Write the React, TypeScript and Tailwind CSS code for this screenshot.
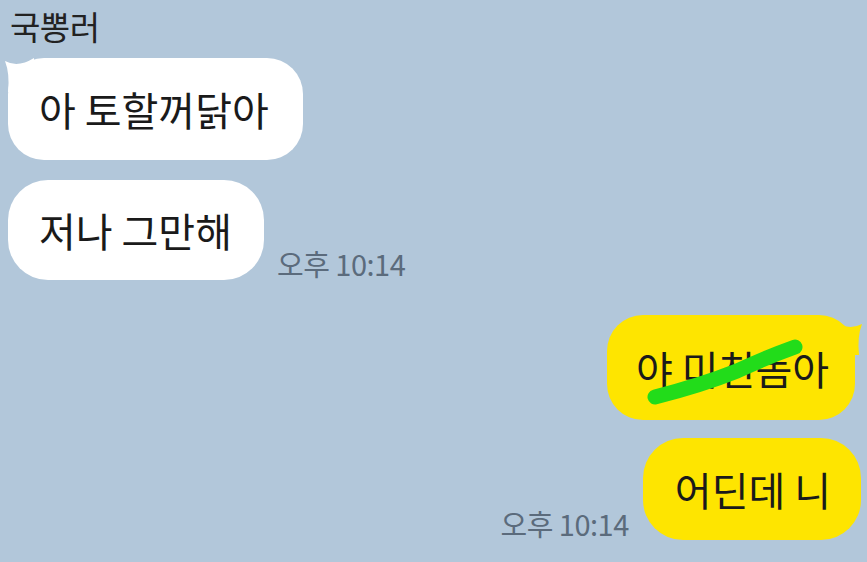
import React from "react"

const font = { fontFamily: '"Noto Sans CJK KR", "Noto Sans", sans-serif' }

function Time({ children }: { children: React.ReactNode }) {
  return <span className="text-[29px] leading-none text-[#5b6b7c] whitespace-nowrap mb-[2px] tracking-[-0.5px]">{children}</span>
}

export default function App() {
  return (
    <div className="w-full h-[562px] bg-[#b2c7da] overflow-hidden relative" style={font}>
      {/* received */}
      <div className="flex flex-col items-start pl-[8px] pt-[10px]">
        <p className="text-[33px] leading-none text-[#222] ml-[2px] tracking-[-0.5px]">국뽕러</p>

        <div className="relative mt-[15px]">
          <svg className="absolute left-[-4px] top-0" width="34" height="34" viewBox="0 0 34 34">
            <path d="M1 3 Q 14 10 30 0 L 30 34 L 4 34 Q 6 16 1 3 Z" fill="#ffffff" />
          </svg>
          <div className="relative h-[102px] flex items-center pl-[31px] pr-[34px] bg-white rounded-[36px] text-[40px] leading-none text-[#1a1a1a]">
            아 토할꺼닭아
          </div>
        </div>

        <div className="flex items-end gap-[13px] mt-[20px]">
          <div className="h-[100px] flex items-center pl-[31px] pr-[32px] bg-white rounded-[40px] text-[40px] leading-none text-[#1a1a1a]">
            저나 그만해
          </div>
          <Time>오후 10:14</Time>
        </div>
      </div>

      {/* sent */}
      <div className="flex flex-col items-end pr-[6px] mt-[35px]">
        <div className="relative mr-[6px]">
          <svg className="absolute right-[-8px] top-[6px]" width="34" height="34" viewBox="0 0 34 34">
            <path d="M33 3 Q 20 10 4 0 L 4 34 L 30 34 Q 28 16 33 3 Z" fill="#fee500" />
          </svg>
          <div className="relative h-[105px] flex items-center pl-[29px] pr-[26px] bg-[#fee500] rounded-[36px] text-[40px] leading-none text-[#1a1a1a]">
            야 미친놈아
          </div>
          <svg className="absolute left-0 top-0 pointer-events-none" width="245" height="105" viewBox="0 0 245 105">
            <path d="M48 82 Q 95 70 130 56 Q 160 42 188 32" stroke="#22dc1a" strokeWidth="15" strokeLinecap="round" fill="none" />
          </svg>
        </div>

        <div className="flex items-end gap-[14px] mt-[18px]">
          <Time>오후 10:14</Time>
          <div className="h-[102px] flex items-center pl-[32px] pr-[30px] bg-[#fee500] rounded-[40px] text-[40px] leading-none text-[#1a1a1a]">
            어딘데 니
          </div>
        </div>
      </div>
    </div>
  )
}
